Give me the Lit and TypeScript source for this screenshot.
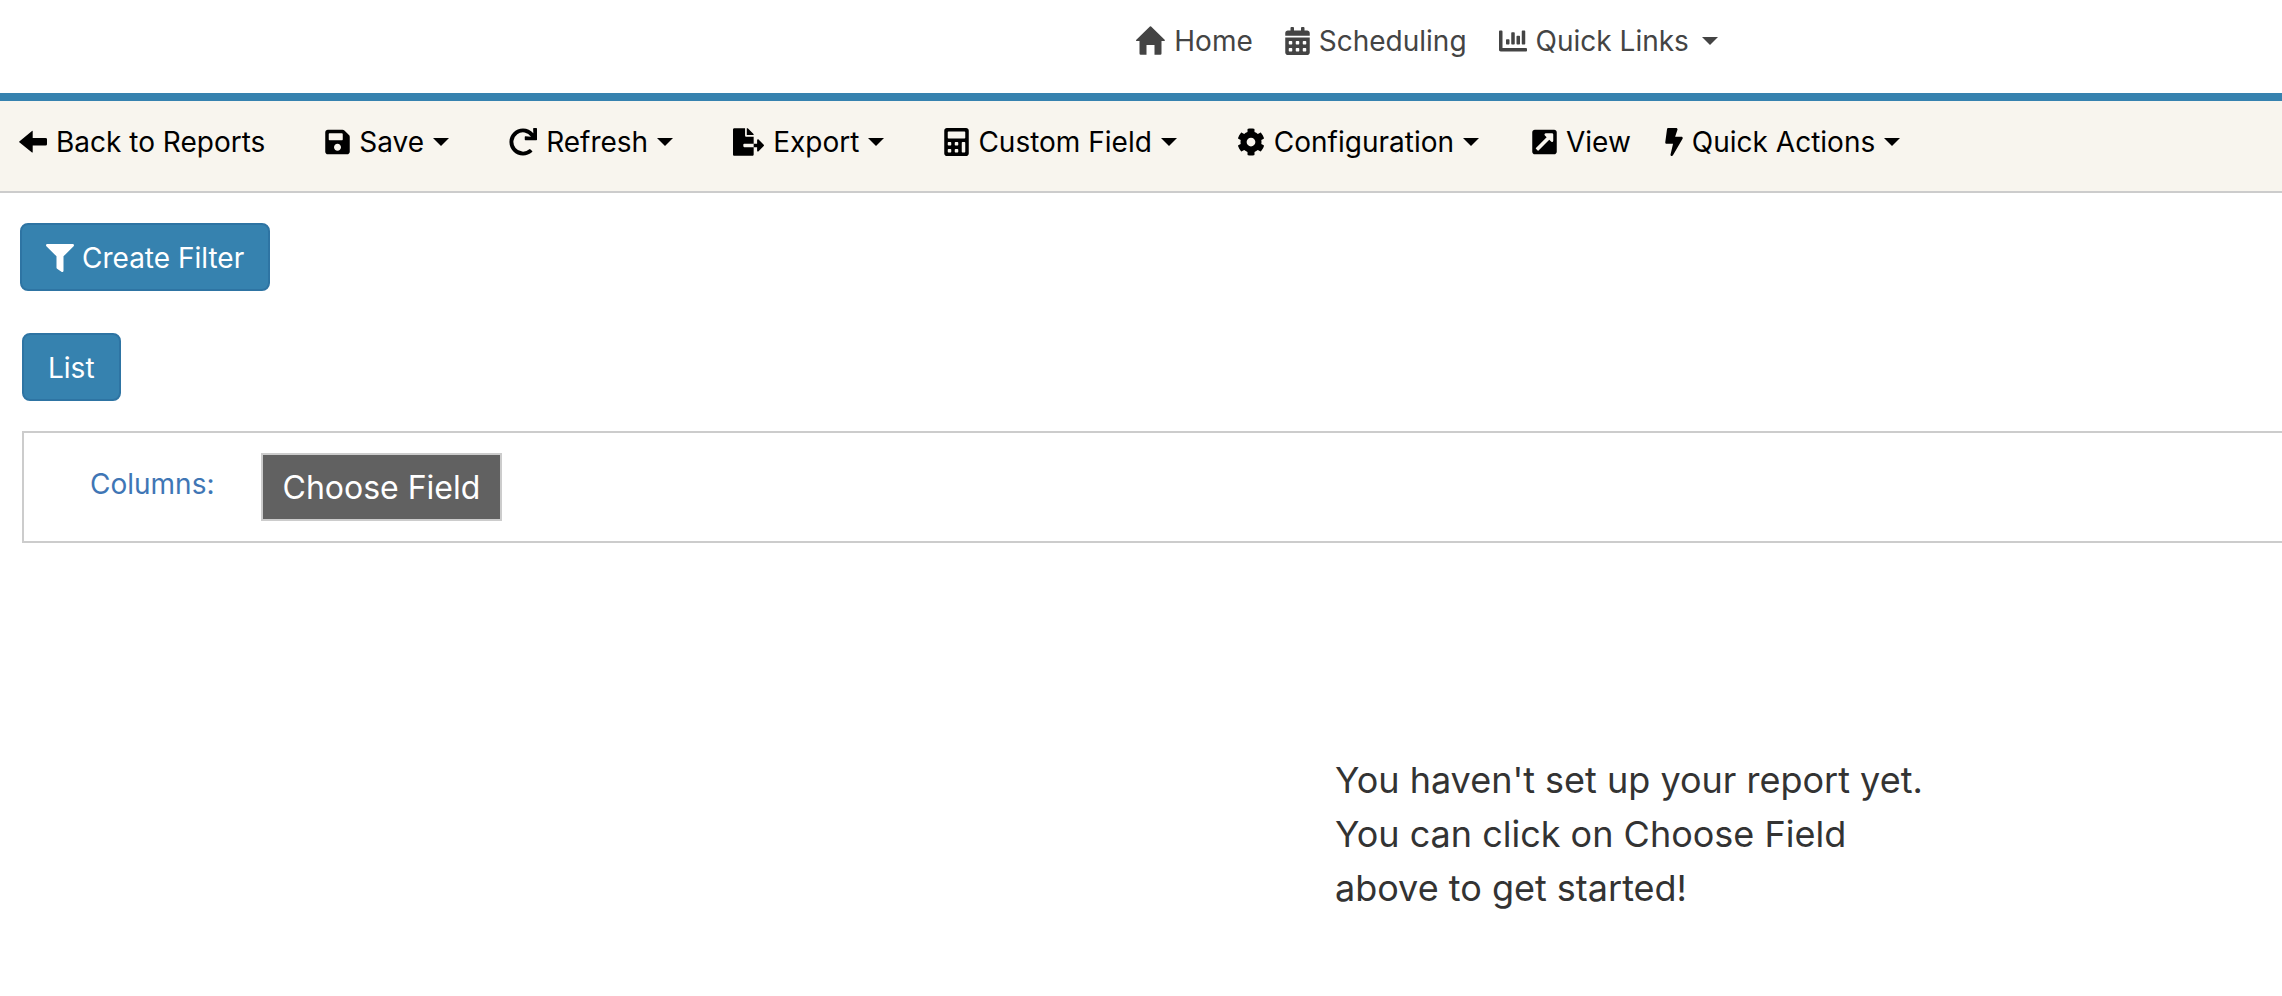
import { LitElement, html, css, svg, nothing } from "lit";
import { customElement } from "lit/decorators.js";

type Icon = { w: number; h: number; box: string; d: string };

const icons: Record<string, Icon> = {
  home: {
    w: 30, h: 30, box: "0 0 30 30",
    d: "M14.9 .5Q15.500 0 16.100 .5L29.900 14.1Q30 14.900 29.500 14.900H26.500V27.500Q26.500 28.700 25.300 28.700H19.500V19H11.500V28.700H5.700Q4.500 28.700 4.500 27.500V14.900H1.500Q.5 14.900 1.100 14.100Z",
  },
  calendar: {
    w: 25, h: 28, box: "0 0 448 512",
    d: "M0 464c0 26.500 21.500 48 48 48h352c26.500 0 48-21.500 48-48V192H0v272zm320-196c0-6.600 5.400-12 12-12h40c6.600 0 12 5.400 12 12v40c0 6.600-5.400 12-12 12h-40c-6.600 0-12-5.400-12-12v-40zm0 128c0-6.600 5.400-12 12-12h40c6.600 0 12 5.400 12 12v40c0 6.600-5.400 12-12 12h-40c-6.600 0-12-5.400-12-12v-40zM192 268c0-6.600 5.400-12 12-12h40c6.600 0 12 5.400 12 12v40c0 6.600-5.400 12-12 12h-40c-6.600 0-12-5.400-12-12v-40zm0 128c0-6.600 5.400-12 12-12h40c6.600 0 12 5.400 12 12v40c0 6.600-5.400 12-12 12h-40c-6.600 0-12-5.400-12-12v-40zM64 268c0-6.600 5.400-12 12-12h40c6.600 0 12 5.400 12 12v40c0 6.600-5.400 12-12 12H76c-6.600 0-12-5.400-12-12v-40zm0 128c0-6.600 5.400-12 12-12h40c6.600 0 12 5.400 12 12v40c0 6.600-5.400 12-12 12H76c-6.600 0-12-5.400-12-12v-40zM400 64h-48V16c0-8.800-7.200-16-16-16h-32c-8.800 0-16 7.200-16 16v48H160V16c0-8.800-7.200-16-16-16h-32c-8.800 0-16 7.200-16 16v48H48C21.500 64 0 85.500 0 112v48h448v-48c0-26.500-21.500-48-48-48z",
  },
  chart: {
    w: 28, h: 28, box: "0 0 512 512",
    d: "M332.800 320h38.400c6.400 0 12.800-6.400 12.800-12.800V172.800c0-6.400-6.400-12.800-12.800-12.800h-38.400c-6.400 0-12.800 6.400-12.800 12.800v134.400c0 6.400 6.400 12.800 12.800 12.800zm96 0h38.400c6.400 0 12.800-6.400 12.800-12.800V76.800c0-6.400-6.400-12.800-12.800-12.800h-38.400c-6.400 0-12.800 6.400-12.800 12.800v230.400c0 6.400 6.400 12.800 12.800 12.800zm-288 0h38.400c6.400 0 12.800-6.400 12.800-12.800v-70.400c0-6.400-6.400-12.800-12.800-12.800h-38.400c-6.400 0-12.800 6.400-12.800 12.800v70.400c0 6.400 6.400 12.800 12.800 12.800zm96 0h38.400c6.400 0 12.800-6.400 12.800-12.800V108.800c0-6.400-6.400-12.800-12.800-12.800h-38.400c-6.400 0-12.800 6.400-12.800 12.800v198.400c0 6.400 6.400 12.800 12.800 12.800zM496 384H64V80c0-8.840-7.160-16-16-16H16C7.160 64 0 71.160 0 80v336c0 17.670 14.330 32 32 32h464c8.840 0 16-7.160 16-16v-32c0-8.840-7.160-16-16-16z",
  },
  back: {
    w: 28, h: 28, box: "0 0 28 28",
    d: "M.3 13.400L13 2.900Q13.700 2.400 13.700 3.300V10H26.500Q28 10 28 11.300V16.200Q28 17.500 26.500 17.500H13.700V24Q13.700 24.900 13 24.400L.3 14.200Q-.1 13.800 .3 13.400Z",
  },
  save: {
    w: 25, h: 28, box: "0 0 448 512",
    d: "M433.941 129.941l-83.882-83.882A48 48 0 0 0 316.118 32H48C21.490 32 0 53.490 0 80v352c0 26.510 21.490 48 48 48h352c26.510 0 48-21.490 48-48V163.882a48 48 0 0 0-14.059-33.941zM224 416c-35.346 0-64-28.654-64-64 0-35.346 28.654-64 64-64s64 28.654 64 64c0 35.346-28.654 64-64 64zm96-304.520V212c0 6.627-5.373 12-12 12H76c-6.627 0-12-5.373-12-12V108c0-6.627 5.373-12 12-12h228.520c3.183 0 6.235 1.264 8.485 3.515l3.480 3.480A11.996 11.996 0 0 1 320 111.480z",
  },
  refresh: {
    w: 28, h: 28, box: "0 0 512 512",
    d: "M500.330 0h-47.410a12 12 0 0 0-12 12.570l4 82.760A247.420 247.420 0 0 0 256 8C119.340 8 7.900 119.530 8 256.190 8.100 393.070 119.100 504 256 504a247.100 247.100 0 0 0 166.180-63.910 12 12 0 0 0 .48-17.430l-34-34a12 12 0 0 0-16.380-.55A176 176 0 1 1 402.100 157.800l-101.530-4.870a12 12 0 0 0-12.570 12v47.410a12 12 0 0 0 12 12h200.330a12 12 0 0 0 12-12V12a12 12 0 0 0-12-12z",
  },
  export: {
    w: 31, h: 28, box: "0 0 576 512",
    d: "M384 121.900c0-6.300-2.500-12.400-7-16.900L279.100 7c-4.500-4.500-10.600-7-17-7H256v128h128zM571 308l-95.700-96.400c-10.100-10.100-27.400-3-27.400 11.300V288h-64v64h64v65.200c0 14.300 17.300 21.400 27.400 11.300L571 332c6.600-6.600 6.600-17.400 0-24zm-379 28v-32c0-8.800 7.200-16 16-16h176V160H248c-13.200 0-24-10.800-24-24V0H24C10.700 0 0 10.700 0 24v464c0 13.300 10.700 24 24 24h336c13.300 0 24-10.700 24-24V352H208c-8.800 0-16-7.200-16-16z",
  },
  calculator: {
    w: 25, h: 28, box: "0 0 448 512",
    d: "M400 0H48C22.400 0 0 22.400 0 48v416c0 25.600 22.400 48 48 48h352c25.600 0 48-22.400 48-48V48c0-25.600-22.400-48-48-48zM128 435.200c0 6.400-6.400 12.800-12.800 12.800H76.800c-6.400 0-12.800-6.400-12.800-12.800v-38.400c0-6.400 6.400-12.800 12.800-12.800h38.400c6.400 0 12.800 6.400 12.800 12.800v38.400zm0-128c0 6.400-6.400 12.800-12.800 12.800H76.800c-6.400 0-12.800-6.400-12.800-12.800v-38.400c0-6.400 6.400-12.800 12.800-12.800h38.400c6.400 0 12.800 6.400 12.800 12.800v38.400zm128 128c0 6.400-6.400 12.800-12.800 12.800h-38.400c-6.400 0-12.800-6.400-12.800-12.800v-38.400c0-6.400 6.400-12.800 12.800-12.800h38.400c6.400 0 12.800 6.400 12.800 12.800v38.400zm0-128c0 6.400-6.400 12.800-12.800 12.800h-38.400c-6.400 0-12.800-6.400-12.800-12.800v-38.400c0-6.400 6.400-12.800 12.800-12.800h38.400c6.400 0 12.800 6.400 12.800 12.800v38.400zm128 128c0 6.400-6.400 12.800-12.800 12.800h-38.400c-6.400 0-12.800-6.400-12.800-12.800V268.800c0-6.400 6.400-12.800 12.800-12.800h38.400c6.400 0 12.800 6.400 12.800 12.800v166.400zm0-256c0 6.400-6.400 12.800-12.800 12.800H76.800c-6.400 0-12.800-6.400-12.800-12.800V76.800C64 70.400 70.400 64 76.800 64h294.400c6.400 0 12.800 6.400 12.800 12.800v102.400z",
  },
  gear: {
    w: 28, h: 28, box: "0 0 512 512",
    d: "M487.400 315.700l-42.600-24.600c4.300-23.200 4.300-47 0-70.200l42.600-24.600c4.900-2.800 7.100-8.600 5.500-14-11.100-35.600-30-67.800-54.700-94.600-3.800-4.100-10-5.100-14.800-2.300L380.800 110c-17.900-15.400-38.500-27.300-60.800-35.100V25.800c0-5.600-3.900-10.500-9.400-11.700-36.700-8.200-74.300-7.800-109.200 0-5.500 1.200-9.400 6.100-9.400 11.700V75c-22.200 7.900-42.800 19.800-60.800 35.100L88.700 85.500c-4.900-2.800-11-1.900-14.800 2.300-24.700 26.700-43.600 58.900-54.700 94.600-1.700 5.400.6 11.200 5.500 14L67.300 221c-4.300 23.200-4.300 47 0 70.200l-42.600 24.600c-4.900 2.800-7.100 8.600-5.500 14 11.100 35.600 30 67.800 54.700 94.600 3.800 4.100 10 5.100 14.800 2.300l42.600-24.600c17.900 15.400 38.500 27.300 60.800 35.100v49.200c0 5.600 3.900 10.500 9.400 11.700 36.700 8.200 74.300 7.800 109.200 0 5.500-1.200 9.400-6.100 9.400-11.700v-49.200c22.200-7.900 42.800-19.800 60.800-35.100l42.600 24.600c4.900 2.800 11 1.900 14.800-2.300 24.700-26.700 43.600-58.900 54.700-94.600 1.500-5.500-.7-11.300-5.600-14.100zM256 336c-44.100 0-80-35.900-80-80s35.900-80 80-80 80 35.900 80 80-35.900 80-80 80z",
  },
  view: {
    w: 25, h: 28, box: "0 0 448 512",
    d: "M448 80v352c0 26.510-21.490 48-48 48H48c-26.510 0-48-21.490-48-48V80c0-26.510 21.490-48 48-48h352c26.510 0 48 21.490 48 48zm-88 16H248.029c-21.313 0-32.080 25.861-16.971 40.971l31.984 31.987L67.515 364.485c-4.686 4.686-4.686 12.284 0 16.971l31.029 31.029c4.687 4.686 12.285 4.686 16.971 0l195.526-195.526 31.988 31.991C358.058 263.977 384 253.425 384 231.979V120c0-13.255-10.745-24-24-24z",
  },
  bolt: {
    w: 18, h: 28, box: "0 0 320 512",
    d: "M296 160H180.600l42.600-129.800C227.200 15 215.700 0 200 0H56C44 0 33.800 8.900 32.200 20.800l-32 240C-1.700 275.200 9.500 288 24 288h118.700L96.600 482.500c-3.600 15.200 8 29.500 23.300 29.500 8.400 0 16.400-4.400 20.800-12l176-304c9.300-15.900-2.200-36-20.700-36z",
  },
  filter: {
    w: 28, h: 28, box: "0 0 512 512",
    d: "M487.976 0H24.028C2.710 0-8.047 25.866 7.058 40.971L192 225.941V432c0 7.831 3.821 15.170 10.237 19.662l80 55.980C298.020 518.690 320 507.493 320 487.980V225.941l184.947-184.970C520.021 25.896 509.338 0 487.976 0z",
  },
};

const icon = (name: string) => {
  const i = icons[name];
  return html`<svg class="icon" width=${i.w} height=${i.h} viewBox=${i.box} aria-hidden="true">
    ${svg`<path d=${i.d}></path>`}
  </svg>`;
};

const content = (name: string, label: string, menu = false) =>
  html`${icon(name)}<span>${label}</span>${menu ? html`<i class="caret"></i>` : nothing}`;

@customElement("app-root")
export class AppRoot extends LitElement {
  static styles = css`
    :host {
      display: block;
      min-height: 100vh;
      background: #fff;
      color: #333;
      font: 28px/40px Inter, "Open Sans", sans-serif;
      overflow-x: hidden;
    }
    button, a {
      font: inherit;
      color: inherit;
      text-decoration: none;
      white-space: nowrap;
    }
    button {
      background: none;
      border: 0;
      margin: 0;
      padding: 0;
      cursor: pointer;
    }
    .icon {
      fill: currentColor;
      flex: none;
    }
    .caret {
      border: 8px solid transparent;
      border-top-color: currentColor;
      border-bottom: 0;
    }
    .top {
      display: flex;
      gap: 32px;
      padding: 21px 0 32px 49.75%;
      border-bottom: 8px solid #3682af;
      color: #444;
    }
    .item {
      display: inline-flex;
      align-items: center;
      gap: 9px;
    }
    .top .caret {
      margin-left: 4px;
    }
    .toolbar {
      display: flex;
      padding: 21px 19px 29px;
      gap: 60px;
      background: #f8f5ee;
      border-bottom: 2px solid #ccc;
      color: #000;
    }
    .pair {
      display: flex;
      gap: 34px;
      margin-left: -7px;
    }
    .builder {
      display: flex;
      flex-direction: column;
      align-items: flex-start;
      padding: 30px 0 0 20px;
    }
    .primary {
      display: inline-flex;
      align-items: center;
      gap: 8px;
      padding: 13px 24px 11px;
      border: 2px solid #2e74a3;
      border-radius: 8px;
      background: #3682af;
      color: #fff;
    }
    .report {
      align-self: stretch;
      margin: 42px 0 0 2px;
    }
    .columns {
      display: flex;
      align-items: flex-start;
      gap: 46px;
      margin-top: 30px;
      padding: 20px 0 20px 66px;
      border: 2px solid #ccc;
      border-right: 0;
    }
    .label {
      padding-top: 11px;
      color: #3f76b5;
    }
    .choose {
      padding: 13px 20px 11px;
      border: 2px solid #ccc;
      background: #616161;
      color: #fff;
      font-size: 32px;
    }
    .empty {
      margin: 210px 0 0 58.5%;
      max-width: 600px;
      font-size: 36px;
      line-height: 54px;
    }
  `;

  render() {
    return html`
      <nav class="top" aria-label="Main">
        <a class="item" href="#home">${content("home", "Home")}</a>
        <a class="item" href="#scheduling">${content("calendar", "Scheduling")}</a>
        <button class="item" aria-haspopup="menu">${content("chart", "Quick Links", true)}</button>
      </nav>
      <div class="toolbar" role="toolbar" aria-label="Report">
        <a class="item" href="#reports">${content("back", "Back to Reports")}</a>
        <button class="item" aria-haspopup="menu">${content("save", "Save", true)}</button>
        <button class="item" aria-haspopup="menu">${content("refresh", "Refresh", true)}</button>
        <button class="item" aria-haspopup="menu">${content("export", "Export", true)}</button>
        <button class="item" aria-haspopup="menu">${content("calculator", "Custom Field", true)}</button>
        <button class="item" aria-haspopup="menu">${content("gear", "Configuration", true)}</button>
        <div class="pair">
          <button class="item">${content("view", "View")}</button>
          <button class="item" aria-haspopup="menu">${content("bolt", "Quick Actions", true)}</button>
        </div>
      </div>
      <main>
        <div class="builder">
          <button class="primary">${content("filter", "Create Filter")}</button>
          <div class="report">
            <button class="primary">List</button>
            <div class="columns">
              <span class="label" id="columns-label">Columns:</span>
              <button class="choose" aria-describedby="columns-label">Choose Field</button>
            </div>
          </div>
        </div>
        <p class="empty">You haven't set up your report yet. You can click on Choose Field above to get started!</p>
      </main>
    `;
  }
}
